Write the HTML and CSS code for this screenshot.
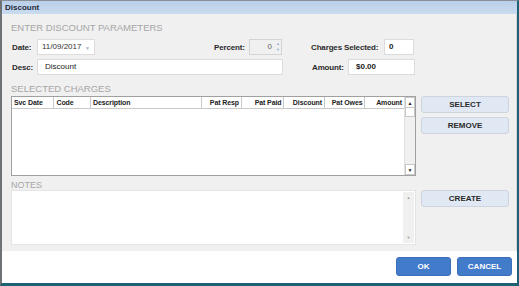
FILE: index.html
```html
<!DOCTYPE html>
<html>
<head>
<meta charset="utf-8">
<link rel="stylesheet" href="styles.css">
</head>
<body>
<div class="window">
  <div class="titlebar">Discount</div>
  <div class="content">
    <div class="heading h1">ENTER DISCOUNT PARAMETERS</div>
    <div class="row r1">
      <label class="lbl l-date">Date:</label>
      <div class="field f-date">11/09/2017<span class="dd">&#9660;</span></div>
      <label class="lbl l-pct">Percent:</label>
      <div class="field f-pct"><span class="pval">0</span><span class="spin"><span>&#9650;</span><span>&#9660;</span></span></div>
      <label class="lbl l-cs">Charges Selected:</label>
      <div class="field f-cs">0</div>
    </div>
    <div class="row r2">
      <label class="lbl l-desc">Desc:</label>
      <div class="field f-desc">Discount</div>
      <label class="lbl l-amt">Amount:</label>
      <div class="field f-amt">$0.00</div>
    </div>
    <div class="heading h2">SELECTED CHARGES</div>
    <div class="section">
      <div class="table">
        <div class="thead">
          <div class="th c1">Svc Date</div>
          <div class="th c2">Code</div>
          <div class="th c3">Description</div>
          <div class="th c4 r">Pat Resp</div>
          <div class="th c5 r">Pat Paid</div>
          <div class="th c6 r">Discount</div>
          <div class="th c7 r">Pat Owes</div>
          <div class="th c8 r">Amount</div>
        </div>
        <div class="tbody"></div>
        <div class="vscroll">
          <div class="sbtn up">&#9650;</div>
          <div class="thumb"></div>
          <div class="track"></div>
          <div class="sbtn down">&#9660;</div>
        </div>
      </div>
      <div class="side">
        <button class="sbutton">SELECT</button>
        <button class="sbutton">REMOVE</button>
      </div>
    </div>
    <div class="heading h3">NOTES</div>
    <div class="section">
      <div class="notes">
        <div class="nscroll"><span>&#9650;</span><span>&#9660;</span></div>
      </div>
      <div class="side">
        <button class="sbutton">CREATE</button>
      </div>
    </div>
  </div>
  <div class="footer">
    <button class="pbutton">OK</button>
    <button class="pbutton">CANCEL</button>
  </div>
</div>
</body>
</html>
```

FILE: styles.css
```css
* { box-sizing: border-box; }
html, body { margin: 0; padding: 0; }
body {
  width: 519px;
  height: 286px;
  font-family: "Liberation Sans", Arial, sans-serif;
  background: #ffffff;
  overflow: hidden;
}
.window {
  width: 519px;
  height: 286px;
  display: flex;
  flex-direction: column;
  border-left: 2px solid #6f7275;
  border-right: 2px solid #1d6173;
  border-bottom: 3px solid #1d6173;
  border-top: 1px solid #8a8f96;
}
.titlebar {
  height: 13px;
  background: linear-gradient(#b9cfe9, #c9dbef);
  font-size: 8px;
  font-weight: bold;
  color: #1e2a38;
  line-height: 13px;
  padding-left: 3px;
  flex: none;
}
.content {
  background: #f0f0f0;
  height: 237px;
  flex: none;
  padding: 0 0 0 8px;
  border-right: 1px solid #d8d8d8;
}
.heading {
  color: #a6a6a6;
  font-size: 9.5px;
  line-height: 12px;
  padding-left: 1px;
}
.h1 { margin-top: 8px; height: 17px; }
.h2 { margin-top: 8px; height: 13px; }
.h3 { margin-top: 3px; height: 11px; font-size: 9px; }
.row {
  display: flex;
  align-items: center;
  height: 16px;
}
.r2 { margin-top: 4px; }
.lbl {
  font-size: 8px;
  font-weight: bold;
  color: #2b2b2b;
  padding-left: 2px;
  letter-spacing: -0.15px;
}
.field {
  height: 16px;
  background: #fff;
  border: 1px solid #dcdcdc;
  font-size: 8px;
  color: #222;
  line-height: 14px;
  padding-left: 4px;
  position: relative;
}
.l-date { width: 27px; }
.f-date { width: 58px; color: #333; }
.dd { position: absolute; right: 4px; top: 1px; font-size: 5px; color: #9bb0d0; }
.l-pct { margin-left: 117px; width: 37px; }
.f-pct { width: 33px; background: #f0f0f0; border-color: #d4d4d4; text-align: right; padding-right: 9px; color: #666; }
.spin { position: absolute; right: 1px; top: 1px; display: flex; flex-direction: column; font-size: 4px; line-height: 6px; color: #9bb0d0; }
.l-cs { margin-left: 27px; width: 75px; }
.f-cs { width: 30px; font-weight: bold; }
.l-desc { width: 27px; }
.f-desc { width: 246px; padding-left: 7px; }
.l-amt { margin-left: 27px; width: 38px; }
.f-amt { width: 67px; font-weight: bold; padding-left: 7px; }
.section {
  display: flex;
  align-items: flex-start;
}
.table {
  width: 405px;
  height: 80px;
  margin-left: 1px;
  border: 1px solid #a0a0a0;
  background: #fff;
  position: relative;
  display: flex;
  flex-direction: column;
}
.thead {
  display: flex;
  height: 12px;
  border-bottom: 1px solid #c8c8c8;
  margin-right: 11px;
}
.th {
  font-size: 7px;
  font-weight: bold;
  color: #222;
  line-height: 11px;
  padding: 0 2px;
  border-right: 1px solid #c8c8c8;
  white-space: nowrap;
  letter-spacing: -0.1px;
}
.th.r { text-align: right; }
.c1 { width: 43px; }
.c2 { width: 37px; }
.c3 { width: 112px; }
.c4 { width: 41px; }
.c5 { width: 43px; }
.c6 { width: 41px; }
.c7 { width: 41px; }
.c8 { width: 39px; border-right: none; }
.vscroll {
  position: absolute;
  right: 0;
  top: 0;
  bottom: 0;
  width: 11px;
  background: #f0f0f0;
  border-left: 1px solid #e0e0e0;
  display: flex;
  flex-direction: column;
}
.sbtn {
  height: 11px;
  font-size: 5px;
  text-align: center;
  line-height: 11px;
  color: #222;
  background: #fff;
  border: 1px solid #c8c8c8;
}
.thumb { height: 9px; background: #fff; border: 1px solid #c8c8c8; border-top: none; }
.track { flex: 1; }
.side {
  margin-left: 5px;
  display: flex;
  flex-direction: column;
  gap: 4px;
}
.sbutton {
  width: 88px;
  height: 17px;
  background: #e0e8f4;
  border: 1px solid #cdd4de;
  border-radius: 3px;
  font-family: "Liberation Sans", Arial, sans-serif;
  font-size: 8px;
  font-weight: bold;
  color: #2a2a2a;
  padding: 0;
}
.notes {
  width: 405px;
  height: 55px;
  margin-left: 1px;
  background: #fff;
  border: 1px solid #e4e4e4;
  position: relative;
}
.nscroll {
  position: absolute;
  right: 1px;
  top: 1px;
  bottom: 1px;
  width: 11px;
  background: #f0f0f0;
  display: flex;
  flex-direction: column;
  justify-content: space-between;
  align-items: center;
  font-size: 4px;
  color: #a0a0a0;
  padding: 3px 0;
}
.footer {
  flex: 1;
  background: #fff;
  display: flex;
  justify-content: flex-end;
  align-items: flex-start;
  gap: 6px;
  padding: 6px 5px 0 0;
}
.pbutton {
  width: 55px;
  height: 19px;
  background: #437bcb;
  border: 1px solid #3a6fba;
  border-radius: 3px;
  color: #fff;
  font-family: "Liberation Sans", Arial, sans-serif;
  font-size: 8px;
  font-weight: bold;
  padding: 0;
}
```
